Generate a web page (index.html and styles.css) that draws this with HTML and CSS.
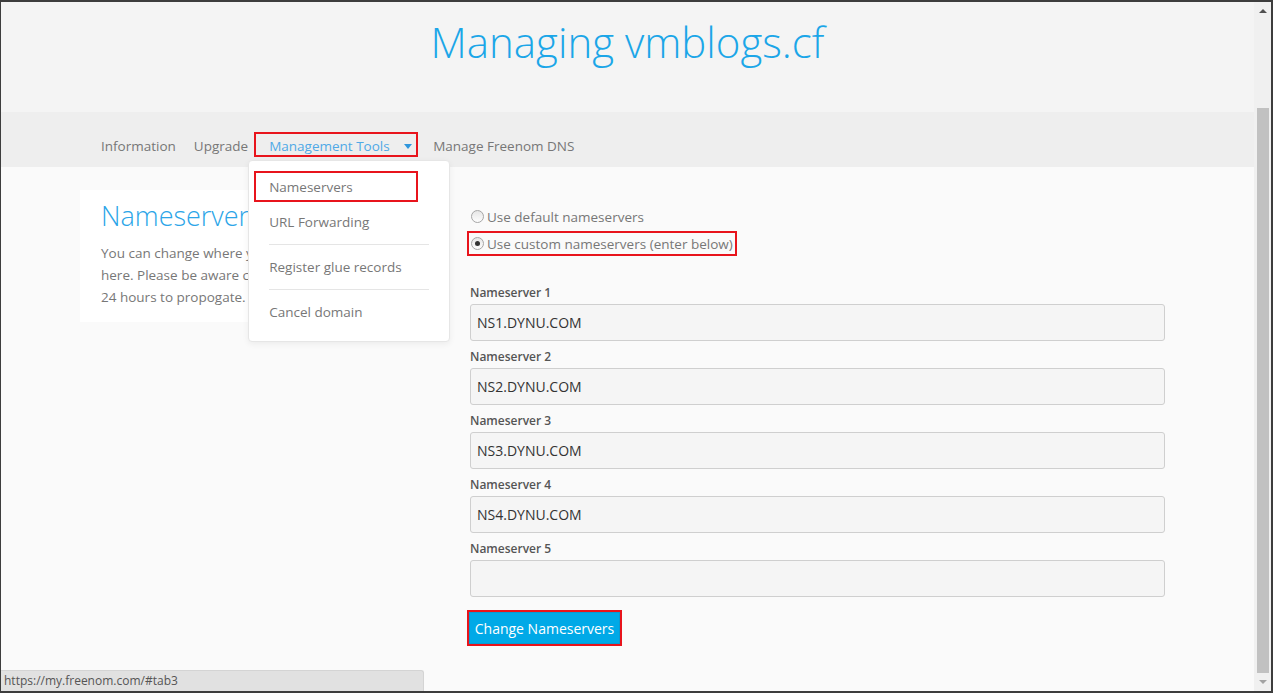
FILE: index.html
```html
<!DOCTYPE html>
<html lang="en">

<head>
    <meta charset="UTF-8">
    <meta name="viewport" content="width=device-width, initial-scale=1.0">
    <title>Managing vmblogs.cf</title>
    <link rel="stylesheet" href="styles.css">
</head>

<body>

    <div class="janela">

        <div class="pagina">

            <header class="topo">
                <h1>Managing vmblogs.cf</h1>
            </header>

            <nav class="menu">
                <a class="item" href="#tab1">Information</a>
                <a class="item" href="#tab2">Upgrade</a>
                <div class="item-drop">
                    <a class="toggle marcado" href="#tab3">Management Tools <span class="seta"></span></a>
                    <ul class="dropdown">
                        <li><a class="marcado" href="#ns">Nameservers</a></li>
                        <li><a href="#fw">URL Forwarding</a></li>
                        <li class="divisor"></li>
                        <li><a href="#glue">Register glue records</a></li>
                        <li class="divisor"></li>
                        <li><a href="#cancel">Cancel domain</a></li>
                    </ul>
                </div>
                <a class="item" href="#tab4">Manage Freenom DNS</a>
            </nav>

            <main class="conteudo">

                <section class="cartao">
                    <h2>Nameservers</h2>
                    <p>You can change where your domain points to<br>
                        here. Please be aware changes can take up to<br>
                        24 hours to propogate.</p>
                </section>

                <form class="formulario">
                    <label class="opcao">
                        <span class="radio"></span>
                        Use default nameservers
                    </label>
                    <label class="opcao marcado">
                        <span class="radio ativo"></span>
                        Use custom nameservers (enter below)
                    </label>

                    <div class="campos">
                        <div class="grupo">
                            <label>Nameserver 1</label>
                            <input type="text" value="NS1.DYNU.COM">
                        </div>
                        <div class="grupo">
                            <label>Nameserver 2</label>
                            <input type="text" value="NS2.DYNU.COM">
                        </div>
                        <div class="grupo">
                            <label>Nameserver 3</label>
                            <input type="text" value="NS3.DYNU.COM">
                        </div>
                        <div class="grupo">
                            <label>Nameserver 4</label>
                            <input type="text" value="NS4.DYNU.COM">
                        </div>
                        <div class="grupo">
                            <label>Nameserver 5</label>
                            <input type="text" value="">
                        </div>
                    </div>

                    <div class="botao-caixa marcado">
                        <button type="button" class="botao">Change Nameservers</button>
                    </div>
                </form>

            </main>
        </div>

        <div class="rolagem">
            <div class="seta-cima"></div>
            <div class="trilho">
                <div class="polegar"></div>
            </div>
            <div class="seta-baixo"></div>
        </div>

        <div class="status">https://my.freenom.com/#tab3</div>
    </div>

</body>

</html>
```

FILE: styles.css
```css
body {
    margin: 0;
    font-family: "Open Sans", "Liberation Sans", sans-serif;
    font-size: 13.5px;
    color: #777;
}

.janela {
    width: 1273px;
    height: 693px;
    box-sizing: border-box;
    border-style: solid;
    border-color: #3d3d3d;
    border-width: 2px 2px 2px 1px;
    display: flex;
    position: relative;
    overflow: hidden;
}

.pagina {
    flex: 1;
    display: flex;
    flex-direction: column;
    background-color: #fafafa;
}

/* topo */

.topo {
    height: 110px;
    background-color: #f4f4f4;
    text-align: center;
}

.topo h1 {
    margin: 0;
    padding-top: 10px;
    font-size: 42px;
    font-weight: 300;
    line-height: 60px;
    color: #1ba6e8;
}

/* menu */

.menu {
    height: 55px;
    box-sizing: border-box;
    padding: 20px 0 0 100px;
    background-color: #eeeeee;
    display: flex;
    align-items: flex-start;
}

.menu a {
    text-decoration: none;
}

.item {
    color: #777;
    line-height: 25px;
    padding-top: 2px;
    margin-right: 18px;
}

.item-drop {
    position: relative;
    margin-left: -12px;
    margin-right: 15px;
}

.toggle {
    display: flex;
    align-items: center;
    width: 164px;
    height: 25px;
    box-sizing: border-box;
    padding: 3px 0 0 13px;
    color: #4fa9e6;
}

.seta {
    width: 0;
    height: 0;
    margin-left: auto;
    margin-right: 4px;
    margin-top: 1px;
    border-left: 4px solid transparent;
    border-right: 4px solid transparent;
    border-top: 5px solid #2f96dc;
}

.marcado {
    border: 2px solid #e8141c;
}

.dropdown {
    position: absolute;
    top: 28px;
    left: -6px;
    width: 202px;
    box-sizing: border-box;
    margin: 0;
    padding: 10px 0 12px;
    list-style: none;
    background-color: #fff;
    border: 1px solid #e6e6e6;
    border-radius: 4px;
    box-shadow: 0 2px 6px rgba(0, 0, 0, 0.06);
    z-index: 5;
}

.dropdown li a {
    display: block;
    height: 34px;
    line-height: 34px;
    padding-left: 20px;
    color: #777;
}

.dropdown li a.marcado {
    width: 164px;
    height: 31px;
    line-height: 29px;
    box-sizing: border-box;
    margin-left: 5px;
    margin-bottom: 3px;
    padding-left: 13px;
}

.divisor {
    height: 1px;
    margin: 5px 20px;
    background-color: #e5e5e5;
}

/* conteudo */

.conteudo {
    flex: 1;
    display: flex;
    align-items: flex-start;
    gap: 30px;
    padding: 23px 0 0 79px;
}

.cartao {
    width: 360px;
    box-sizing: border-box;
    padding: 8px 20px 14px 21px;
    background-color: #fff;
}

.cartao h2 {
    margin: 0 0 8px;
    font-size: 27px;
    font-weight: 300;
    line-height: 36px;
    color: #2ba5e8;
    white-space: nowrap;
}

.cartao p {
    margin: 0;
    line-height: 22px;
    white-space: nowrap;
}

.formulario {
    width: 695px;
    padding-top: 14px;
}

.opcao {
    display: flex;
    align-items: center;
    gap: 3px;
    width: fit-content;
    height: 25px;
    box-sizing: border-box;
    padding: 0 2px;
    margin-left: -3px;
    border: 2px solid transparent;
    color: #777;
    margin-bottom: 2px;
}

.opcao.marcado {
    border-color: #e8141c;
}

.radio {
    width: 13px;
    height: 13px;
    box-sizing: border-box;
    border: 1px solid #a6a6a6;
    border-radius: 50%;
    background: linear-gradient(#e6e6e6, #fdfdfd);
    display: flex;
    align-items: center;
    justify-content: center;
}

.radio.ativo::after {
    content: "";
    width: 5px;
    height: 5px;
    border-radius: 50%;
    background-color: #333;
}

.campos {
    margin-top: 29px;
}

.grupo {
    margin-bottom: 8px;
}

.grupo label {
    display: block;
    font-size: 12px;
    font-weight: 600;
    line-height: 16px;
    color: #555;
    margin-bottom: 3px;
}

.grupo input {
    display: block;
    width: 695px;
    height: 37px;
    box-sizing: border-box;
    padding: 0 6px;
    border: 1px solid #cfcfcf;
    border-radius: 3px;
    background-color: #f5f5f5;
    font-family: "Open Sans", "Liberation Sans", sans-serif;
    font-size: 14px;
    color: #333;
}

.botao-caixa {
    display: inline-block;
    margin-top: 5px;
    margin-left: -3px;
    line-height: 0;
}

.botao {
    width: 151px;
    height: 32px;
    padding: 0;
    border: 1px solid #0a9ad2;
    background-color: #00a9e7;
    color: #fff;
    font-family: "Open Sans", "Liberation Sans", sans-serif;
    font-size: 14px;
}

/* barra de rolagem */

.rolagem {
    width: 17px;
    background-color: #f0f0f0;
    display: flex;
    flex-direction: column;
}

.seta-cima,
.seta-baixo {
    height: 17px;
    display: flex;
    align-items: center;
    justify-content: center;
}

.seta-baixo {
    height: 18px;
}

.seta-cima::after {
    content: "";
    border-left: 4px solid transparent;
    border-right: 4px solid transparent;
    border-bottom: 4px solid #505050;
}

.seta-baixo::after {
    content: "";
    border-left: 4px solid transparent;
    border-right: 4px solid transparent;
    border-top: 4px solid #a3a3a3;
}

.trilho {
    flex: 1;
    padding-top: 89px;
}

.polegar {
    height: 565px;
    margin: 0 2px 0 3px;
    background-color: #c1c1c1;
}

/* status */

.status {
    position: absolute;
    left: -1px;
    bottom: 0;
    width: 424px;
    height: 21px;
    box-sizing: border-box;
    padding-left: 4px;
    background-color: #e1e1e1;
    border-top: 1px solid #d4d4d4;
    border-right: 1px solid #d4d4d4;
    border-top-right-radius: 3px;
    font-size: 12px;
    line-height: 20px;
    color: #555;
}
```
